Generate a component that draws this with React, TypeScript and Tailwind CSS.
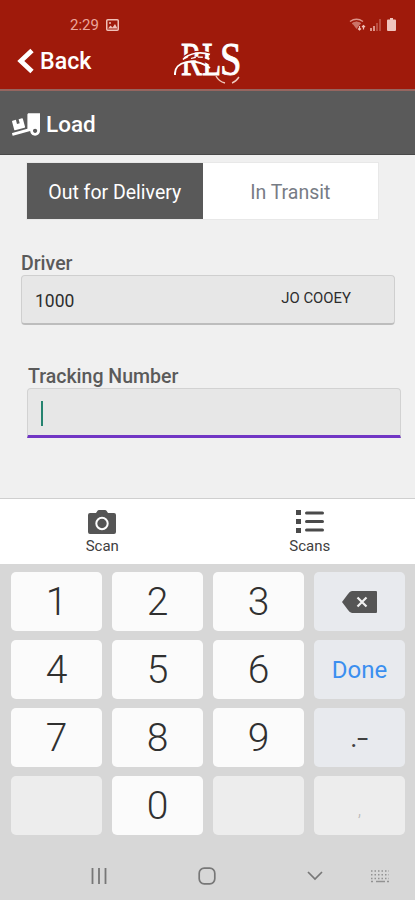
import React, { useState } from 'react';
import { FaTruckLoading } from 'react-icons/fa';

interface KeyDef {
  label: string;
  kind: 'digit' | 'action' | 'disabled';
}

const keys: KeyDef[] = [
  { label: '1', kind: 'digit' },
  { label: '2', kind: 'digit' },
  { label: '3', kind: 'digit' },
  { label: 'backspace', kind: 'action' },
  { label: '4', kind: 'digit' },
  { label: '5', kind: 'digit' },
  { label: '6', kind: 'digit' },
  { label: 'Done', kind: 'action' },
  { label: '7', kind: 'digit' },
  { label: '8', kind: 'digit' },
  { label: '9', kind: 'digit' },
  { label: '.-', kind: 'action' },
  { label: '', kind: 'disabled' },
  { label: '0', kind: 'digit' },
  { label: '', kind: 'disabled' },
  { label: ',', kind: 'disabled' },
];

const keyStyles = {
  digit: 'bg-[#fbfbfb] text-[#303030]',
  action: 'bg-[#e8eaee] text-[#404040]',
  disabled: 'bg-[#ededed] text-[#b5b5b5]',
};

function Logo() {
  return (
    <svg className="w-[70px] h-[54px]" viewBox="0 -8 70 54" fill="none">
      <g fill="white" stroke="white" strokeWidth="0.9" fontFamily="Liberation Serif, serif" fontSize="46">
        <text transform="translate(7 34) scale(0.68 1)">R</text>
        <text transform="translate(28 34) scale(0.68 1)">L</text>
        <text transform="translate(46 34) scale(0.84 1)">S</text>
      </g>
      {/* road sweeping over the letters */}
      <path d="M4 25C12 16 26 15 36 22" stroke="#9f1a0b" strokeWidth="3.500" />
      <path d="M10 15.500C18 10 28 10 35 12" stroke="#9f1a0b" strokeWidth="1.500" />
      <path d="M1 34C0 20 20 16 36 27" stroke="white" strokeWidth="2" />
      <path d="M9 18.500C16 11.500 27 10.500 36 13.500" stroke="white" strokeWidth="1.700" />
      <path d="M17 17.500C23 15.500 29 15.500 36 18" stroke="white" strokeWidth="1.300" strokeDasharray="5 2" />
      <path d="M42 35C44 39 47 41 51 42" stroke="#f0c9bd" strokeWidth="1.400" />
      <path d="M58 42C61 41 63 39 65 36" stroke="#f0c9bd" strokeWidth="1.400" />
    </svg>
  );
}

function Key({ label, kind }: KeyDef) {
  return (
    <button className={`flex items-center justify-center rounded-[5px] ${keyStyles[kind]}`}>
      {label === 'backspace' ? (
        <svg className="w-[35px] h-[22px]" viewBox="0 0 35 22">
          <path d="M10 0h24q1 0 1 1v20q0 1-1 1H10Q8 22 6 19L0 11 6 3Q8 0 10 0Z" fill="#555" />
          <path d="M15.500 6.500l9 9m0-9l-9 9" stroke="#f0f0f0" strokeWidth="2.200" />
        </svg>
      ) : label === 'Done' ? (
        <span className="text-[24px] leading-none text-[#3b8ff0]">Done</span>
      ) : label === '.-' ? (
        <span className="flex items-center text-[27px] leading-none pt-[2px]">
          <span>.</span>
          <span className="inline-block origin-left scale-x-150 pr-[4px]">-</span>
        </span>
      ) : label === ',' ? (
        <span className="text-[18px] leading-none font-light pt-[8px]">,</span>
      ) : (
        <span className="text-[39px] leading-none font-light pt-[2px]">{label}</span>
      )}
    </button>
  );
}

export default function App() {
  const [mode, setMode] = useState<'delivery' | 'transit'>('delivery');

  return (
    <div className="w-[415px] h-[900px] flex flex-col overflow-hidden bg-[#f0f0f0] font-['Roboto',sans-serif]">
      {/* Status bar and header */}
      <header className="h-[91px] shrink-0 bg-[#9f1a0b] border-b-2 border-[#96655f]">
        <div className="h-[38px] pt-[11px] pl-[70px] pr-[19px] flex items-center justify-between text-[#eba69d]">
          <div className="flex items-center gap-[7px]">
            <span className="text-[15px] leading-none pt-px">2:29</span>
            <svg className="w-[13px] h-[12px]" viewBox="0 0 13 12">
              <rect x="0.750" y="0.750" width="11.500" height="10.500" rx="1" fill="none" stroke="#f0c0b8" strokeWidth="1.500" />
              <path d="M2 9.500l2.500-3 2 2 2.500-3.500 2.500 4.500z" fill="#f0c0b8" />
              <circle cx="4" cy="4" r="1" fill="#f0c0b8" />
            </svg>
          </div>
          <div className="flex items-center">
            <svg className="w-[17px] h-[13px]" viewBox="0 0 17 13" fill="none" stroke="#dc9389" strokeWidth="1.500">
              <path d="M1 3.500Q7.500-1 14 3.500M3.500 6Q7.500 3 11.500 6" />
              <path d="M3 5l4.500 6L12 5Q7.500 2 3 5Z" fill="#cb7468" stroke="none" />
              <path d="M10.500 12V8M9 10.500l1.500 1.500 1.500-1.500M14.500 7.500v4M13 9l1.500-1.500L16 9" stroke="#efc0b8" strokeWidth="1.200" />
            </svg>
            <svg className="ml-[4px] w-[11px] h-[12px]" viewBox="0 0 11 12">
              <path d="M0 9h2v3H0zM3 7h2v5H3z" fill="#dc9389" />
              <path d="M6 4h2v8H6zM9 0h2v12H9z" fill="#b94d40" />
            </svg>
            <svg className="ml-[6px] w-[9px] h-[13px]" viewBox="0 0 9 13">
              <path d="M3 0h3v1.500h2q1 0 1 1V12q0 1-1 1H1q-1 0-1-1V2.500q0-1 1-1h2z" fill="#f0c4bd" />
            </svg>
          </div>
        </div>
        <div className="h-[51px] grid grid-cols-[156px_1fr]">
          <button className="flex items-center pl-[17px] pb-[6px] text-white">
            <svg className="w-[17px] h-[26px]" viewBox="0 0 17 26" fill="none" stroke="white" strokeWidth="4.800">
              <path d="M15 2.500L3.800 13 15 23.500" />
            </svg>
            <span className="ml-[6px] text-[23.2px] leading-none font-medium pt-[2px]">Back</span>
          </button>
          <div className="pl-[18px] -mt-[5px]">
            <Logo />
          </div>
        </div>
      </header>

      {/* Page title */}
      <div className="h-[64px] shrink-0 flex items-center bg-[#5a5a5a] border-b border-[#484848] pt-[3px] pl-[12px] text-white">
        <FaTruckLoading className="w-[28px] h-[23px]" />
        <h1 className="ml-[6px] text-[22.5px] leading-none font-medium">Load</h1>
      </div>

      <main className="flex-1 pt-[7px]">
        <div className="ml-[26px] w-[353px] h-[58px] grid grid-cols-2 border border-[#e8e8e8] text-[19.5px]">
          <button
            onClick={() => setMode('delivery')}
            className={`pt-[3px] ${mode === 'delivery' ? 'bg-[#595959] text-white' : 'bg-white text-[#777c85]'}`}
          >
            Out for Delivery
          </button>
          <button
            onClick={() => setMode('transit')}
            className={`pt-[3px] ${mode === 'transit' ? 'bg-[#595959] text-white' : 'bg-white text-[#777c85]'}`}
          >
            In Transit
          </button>
        </div>

        <div className="mt-[32px] ml-[21px] w-[374px]">
          <label className="block h-[23px] text-[19.5px] leading-[23px] font-medium text-[#5a5a5a]">Driver</label>
          <div className="h-[50px] flex items-center justify-between rounded-[4px] border border-b-2 border-[#cfcfcf] border-b-[#bdbdbd] bg-[#e7e7e7] pl-[13px] pr-[43px] text-[#2d2d2d]">
            <span className="text-[17.5px] leading-none pt-[4px]">1000</span>
            <span className="text-[14.9px] leading-none pb-[2px]">JO COOEY</span>
          </div>
        </div>

        <div className="mt-[39px] ml-[27px] w-[374px]">
          <label className="block h-[24px] pl-px text-[19.5px] leading-[25px] font-medium text-[#5a5a5a]">Tracking Number</label>
          <div className="h-[50px] flex items-center rounded-t-[4px] border border-b-[3px] border-[#d2d2d2] border-b-[#7136c4] bg-[#e7e7e7] pl-[13px]">
            <span className="w-[2px] h-[25px] mt-[2px] bg-[#25836f]" />
          </div>
        </div>
      </main>

      {/* Bottom tabs */}
      <nav className="h-[66px] shrink-0 grid grid-cols-2 bg-white border-t border-[#cfcfcf] text-[15px] text-[#404040]">
        <button className="flex flex-col items-center pt-[11px] pr-[3px]">
          <svg className="w-[28px] h-[24px]" viewBox="0 0 28 24">
            <path d="M2 3h6l1.500-2.200Q10 0 11 0h6q1 0 1.500.8L20 3h6q2 0 2 2v17q0 2-2 2H2q-2 0-2-2V5q0-2 2-2Z" fill="#555" />
            <circle cx="14" cy="13.500" r="5.700" fill="none" stroke="white" strokeWidth="2" />
          </svg>
          <span className="mt-[5px] leading-none">Scan</span>
        </button>
        <button className="flex flex-col items-center pt-[11px] pr-[3px]">
          <svg className="w-[28px] h-[24px]" viewBox="0 0 28 24" fill="#4a4a4a">
            <path d="M0 0h5v5H0zM0 9h5v5H0zM0 18h5v5H0z" />
            <path d="M10.500 3h16M10.500 11.500h16M10.500 20h16" stroke="#4a4a4a" strokeWidth="3" strokeLinecap="round" />
          </svg>
          <span className="mt-[5px] leading-none">Scans</span>
        </button>
      </nav>

      {/* Numeric keyboard */}
      <div className="h-[336px] shrink-0 bg-[#d7d7d7] pt-[8px]">
        <div className="ml-[11px] w-[394px] h-[263px] grid grid-cols-4 grid-rows-4 gap-x-[10px] gap-y-[9px]">
          {keys.map((key, index) => (
            <Key key={index} {...key} />
          ))}
        </div>
        <div className="mt-[32px] pl-[91px] pr-[25px] h-[18px] flex items-center text-[#777]">
          <svg className="w-[16px] h-[16px]" viewBox="0 0 16 16" stroke="currentColor" strokeWidth="1.800">
            <path d="M1.500 0v16M8 0v16M14.500 0v16" />
          </svg>
          <svg className="ml-[91px] w-[18px] h-[18px]" viewBox="0 0 18 18" fill="none" stroke="currentColor" strokeWidth="1.700">
            <rect x="1.200" y="1.200" width="15.600" height="15.600" rx="5" />
          </svg>
          <svg className="ml-[91px] w-[16px] h-[10px]" viewBox="0 0 16 10" fill="none" stroke="currentColor" strokeWidth="1.700">
            <path d="M1 1l7 7 7-7" />
          </svg>
          <svg className="ml-auto w-[20px] h-[13px]" viewBox="0 0 20 13" fill="none" stroke="#929292">
            <path d="M1 1h18M1 4.700h18M1 8.400h18" strokeWidth="1.500" strokeDasharray="1.500 2" />
            <path d="M1 11.500h2M6 11.500h9M17 11.500h2" strokeWidth="1.500" />
          </svg>
        </div>
      </div>
    </div>
  );
}
